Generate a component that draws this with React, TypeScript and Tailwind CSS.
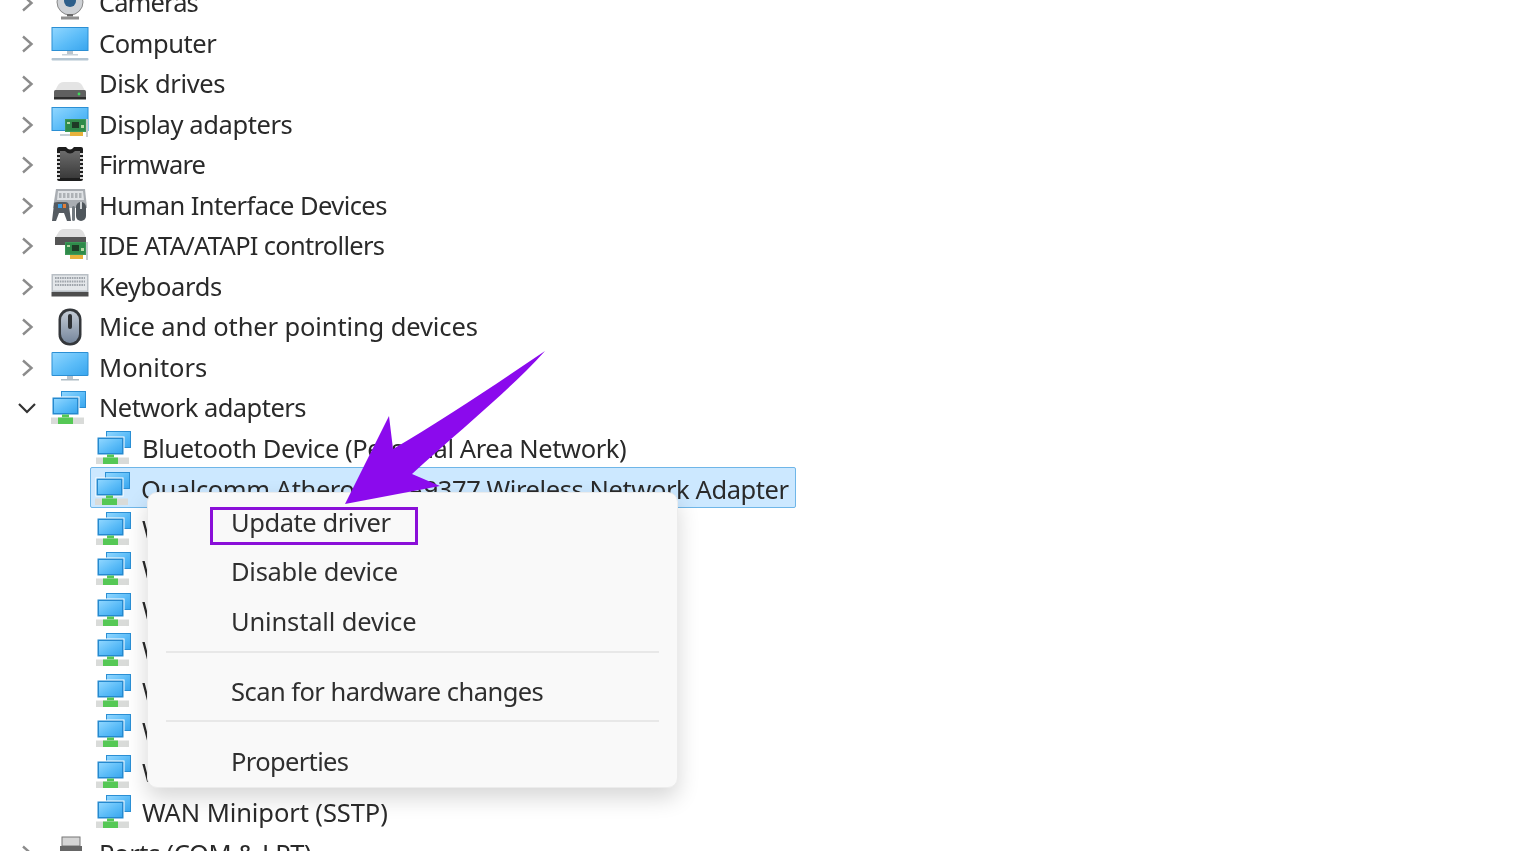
import React from "react";

const Gradients = () => (
  <svg width="0" height="0" className="absolute">
    <defs>
      <linearGradient id="scr" x1="0" y1="0" x2="1" y2="1">
        <stop offset="0" stopColor="#8fd6ff" />
        <stop offset="0.55" stopColor="#5bbcf8" />
        <stop offset="1" stopColor="#3aa6ee" />
      </linearGradient>
      <linearGradient id="chip" x1="0" y1="0" x2="0" y2="1">
        <stop offset="0" stopColor="#6b6b6b" />
        <stop offset="1" stopColor="#3a3a3a" />
      </linearGradient>
      <linearGradient id="mouse" x1="0" y1="0" x2="0" y2="1">
        <stop offset="0" stopColor="#c4ccd6" />
        <stop offset="1" stopColor="#76869c" />
      </linearGradient>
    </defs>
  </svg>
);

const Card = ({ x = 16, y = 20 }: { x?: number; y?: number }) => (
  <g transform={`translate(${x} ${y})`}>
    <rect x="0" y="0" width="21" height="13" fill="#3f9a5a" />
    <rect x="0.8" y="0.8" width="19.4" height="11" fill="#2f8a4a" />
    <rect x="7" y="3" width="7" height="6" fill="#1e3b26" />
    <rect x="2" y="3" width="3" height="2" fill="#b5d9a4" />
    <rect x="16" y="6" width="3" height="3" fill="#b5d9a4" />
    <rect x="5" y="13" width="13" height="4" fill="#e8b23c" />
    <rect x="21" y="0" width="2" height="18" fill="#c8ccd0" />
  </g>
);

const ComputerIcon = () => (
  <svg viewBox="0 0 40 36" className="w-10 h-9">
    <rect x="1.5" y="1" width="37" height="24" fill="#2b8fd4" />
    <rect x="2.5" y="2" width="35" height="22" fill="url(#scr)" />
    <rect x="17" y="25" width="6" height="3" fill="#b9c4cc" />
    <rect x="12" y="28" width="16" height="1.5" fill="#c8d2d9" />
    <rect x="1.5" y="32" width="37" height="2.5" rx="1" fill="#b4c5d2" />
  </svg>
);
const MonitorIcon = () => (
  <svg viewBox="0 0 40 36" className="w-10 h-9">
    <rect x="1.5" y="2" width="37" height="24" rx="1" fill="#2b8fd4" />
    <rect x="2.5" y="3" width="35" height="22" fill="url(#scr)" />
    <rect x="17" y="26" width="6" height="3" fill="#b9c4cc" />
    <rect x="11" y="29" width="18" height="1.5" fill="#aebbc4" />
  </svg>
);
const DiskIcon = () => (
  <svg viewBox="0 0 40 36" className="w-10 h-9">
    <path d="M7 21 Q9 16 14 16 H26 Q31 16 33 21 L35 25 H5 Z" fill="#e4e4e4" />
    <rect x="4" y="24" width="32" height="9" rx="1.5" fill="#606060" />
    <rect x="4" y="31" width="32" height="2.5" fill="#2d2d2d" />
    <circle cx="29" cy="28" r="1.4" fill="#3ddc5a" />
  </svg>
);
const DisplayIcon = () => (
  <svg viewBox="0 0 40 38" className="w-10 h-[38px]">
    <rect x="1.5" y="1" width="37" height="24" fill="#2b8fd4" />
    <rect x="2.5" y="2" width="35" height="22" fill="url(#scr)" />
    <rect x="10" y="28" width="10" height="2" fill="#c6d0d6" />
    <Card x={15} y={13} />
  </svg>
);
const FirmwareIcon = () => (
  <svg viewBox="0 0 40 38" className="w-10 h-[38px]">
    <path d="M7 3 Q7 1 9 1 H16 Q20 6 24 1 H31 Q33 1 33 3 V33 Q33 35 31 35 H9 Q7 35 7 33 Z" fill="#1d1d1d" />
    <path d="M10 5 H15 Q20 10 25 5 H30 V32 H10 Z" fill="url(#chip)" />
    {[7, 11, 15, 19, 23, 27, 31].map((y) => (
      <g key={y}>
        <rect x="7" y={y} width="3" height="2" fill="#d8d8d8" />
        <rect x="30" y={y} width="3" height="2" fill="#d8d8d8" />
      </g>
    ))}
  </svg>
);
const HidIcon = () => (
  <svg viewBox="0 0 40 36" className="w-10 h-9">
    <path d="M6 1 H35 L37 20 H3 Z" fill="#a9adb2" />
    <path d="M8 3 H33 L34 12 H7 Z" fill="#dfe2e5" />
    {[9, 13, 17, 21, 25, 29].map((x) => (
      <rect key={x} x={x} y="5" width="2.5" height="5" fill="#aeb2b6" />
    ))}
    <path d="M4 16 Q3 14 8 14 H15 Q19 14 19 18 L21 33 H17 L14 25 H9 L6 33 H2 Z" fill="#555b61" />
    <rect x="8" y="16" width="4" height="4" fill="#3a9ae0" />
    <rect x="13" y="16" width="3" height="4" fill="#e07f3a" />
    <rect x="26" y="14" width="10" height="19" rx="5" fill="#4f565c" />
    <rect x="30" y="14" width="2" height="7" fill="#cfd3d6" />
    <rect x="22" y="18" width="3" height="15" rx="1.5" fill="#71787e" />
  </svg>
);
const IdeIcon = () => (
  <svg viewBox="0 0 40 38" className="w-10 h-[38px]">
    <path d="M8 6 Q10 2 14 2 H28 Q32 2 34 6 L36 11 H5 Z" fill="#dfdfdf" />
    <rect x="5" y="10" width="31" height="8" fill="#555" />
    <Card x={15} y={15} />
  </svg>
);
const KeyboardIcon = () => (
  <svg viewBox="0 0 40 28" className="w-10 h-7">
    <rect x="1.5" y="1" width="37" height="18" fill="#b9bfc5" />
    <rect x="3" y="2.5" width="34" height="15" fill="#e4e7ea" />
    {[5, 8.5, 12].map((y) => (
      <path key={y} d={`M5 ${y} H35`} stroke="#9ea4aa" strokeWidth="2" strokeDasharray="1.6 0.8" fill="none" />
    ))}
    <rect x="1.5" y="19" width="37" height="4.5" fill="#4d4d4d" />
  </svg>
);
const MouseIcon = () => (
  <svg viewBox="0 0 40 38" className="w-10 h-[38px]">
    <rect x="8.5" y="0.5" width="23" height="37" rx="11" fill="#34373b" />
    <rect x="11" y="3" width="18" height="32" rx="9" fill="url(#mouse)" />
    <rect x="18" y="6" width="4" height="15" rx="2" fill="#2e3135" />
  </svg>
);
const CameraIcon = () => (
  <svg viewBox="0 0 40 36" className="w-10 h-9">
    <circle cx="20" cy="17" r="13" fill="#cfd2d6" stroke="#888" strokeWidth="1" />
    <circle cx="20" cy="16" r="6" fill="#2e5f8a" />
    <rect x="17" y="29" width="6" height="2.5" fill="#6a6a6a" />
    <rect x="11" y="31.5" width="18" height="3" fill="#8f8f8f" />
  </svg>
);
const NetIcon = () => (
  <svg viewBox="0 0 38 36" className="w-[38px] h-9">
    <rect x="11" y="1" width="25" height="17" fill="#2b8fd4" />
    <rect x="12" y="2" width="23" height="15" fill="url(#scr)" />
    <rect x="1.5" y="6.5" width="28" height="19" fill="#ffffff" />
    <rect x="2.5" y="7.5" width="26" height="17" fill="#2589cf" />
    <rect x="4" y="9" width="23" height="14" fill="url(#scr)" />
    <rect x="12" y="24.5" width="7" height="3" fill="#55c855" />
    <rect x="1" y="27.5" width="33" height="6.5" fill="#d9dbd9" />
    <rect x="8" y="27.5" width="15" height="6.5" fill="#55c855" />
  </svg>
);
const PortIcon = () => (
  <svg viewBox="0 0 40 36" className="w-10 h-9">
    <rect x="12" y="1" width="18" height="9" fill="#d5d5d5" stroke="#777" />
    <rect x="10" y="10" width="22" height="26" fill="#666" />
  </svg>
);

const Chevron = ({ open }: { open?: boolean }) =>
  open ? (
    <svg viewBox="0 0 20 12" className="w-5 h-3 -ml-1">
      <path d="M2 2 L10 10 L18 2" fill="none" stroke="#333" strokeWidth="2.2" />
    </svg>
  ) : (
    <svg viewBox="0 0 13 18" className="w-[13px] h-[18px]">
      <path d="M2 1.5 L10.5 9 L2 16.5" fill="none" stroke="#8c8c8c" strokeWidth="2.4" />
    </svg>
  );

const font = "font-['Noto_Sans','Open_Sans',sans-serif]";

const Top = ({ icon, label, open, t }: { icon: React.ReactNode; label: string; open?: boolean; t: string }) => (
  <div className="flex items-center h-[40.5px] pl-[21px] text-[#2a2a2a]">
    <div className="w-[29px] flex items-center pt-[2px]">
      <Chevron open={open} />
    </div>
    <div className="w-[49px] flex items-center pt-[2px]">{icon}</div>
    <span className={`text-[25.5px] whitespace-nowrap ${t}`}>{label}</span>
  </div>
);

const Child = ({ label, selected, t }: { label: string; selected?: boolean; t: string }) => (
  <div className="flex items-center h-[40.5px] pl-[90px] text-[#2a2a2a]">
    <div
      className={
        selected
          ? "flex items-center self-start h-[41px] -mt-px pt-[3px] w-[706px] pl-[2.5px] bg-[#cce8ff] border border-[#6fb6e8] rounded-[2px]"
          : "flex items-center h-full pl-[3.5px] border border-transparent"
      }
    >
      <div className="w-[47.5px] flex items-center">
        <NetIcon />
      </div>
      <span className={`text-[25.5px] whitespace-nowrap ${t}`}>{label}</span>
    </div>
  </div>
);

const MenuItem = ({ label, className }: { label: string; className: string }) => (
  <div className={`flex items-center pl-[83px] text-[25.5px] text-[#2f2f2f] ${className}`}>{label}</div>
);

export default function App() {
  return (
    <div className={`relative w-[1535px] h-[851px] overflow-hidden bg-white blur-[0.4px] ${font}`}>
      <Gradients />
      <div className="-mt-[18px]">
        <Top icon={<CameraIcon />} label="Cameras" t="tracking-[-0.9px]" />
        <Top icon={<ComputerIcon />} label="Computer" t="tracking-[-0.47px]" />
        <Top icon={<DiskIcon />} label="Disk drives" t="tracking-[-0.35px]" />
        <Top icon={<DisplayIcon />} label="Display adapters" t="tracking-[-0.41px]" />
        <Top icon={<FirmwareIcon />} label="Firmware" t="tracking-[-0.85px]" />
        <Top icon={<HidIcon />} label="Human Interface Devices" t="tracking-[-0.57px]" />
        <Top icon={<IdeIcon />} label="IDE ATA/ATAPI controllers" t="tracking-[-0.71px]" />
        <Top icon={<KeyboardIcon />} label="Keyboards" t="tracking-[-0.35px]" />
        <Top icon={<MouseIcon />} label="Mice and other pointing devices" t="tracking-[-0.12px]" />
        <Top icon={<MonitorIcon />} label="Monitors" t="tracking-[0px]" />
        <Top icon={<NetIcon />} label="Network adapters" open t="tracking-[-0.54px]" />
        <Child label="Bluetooth Device (Personal Area Network)" t="tracking-[-0.42px]" />
        <Child label="Qualcomm Atheros QCA9377 Wireless Network Adapter" selected t="tracking-[-0.41px]" />
        <Child label="WAN Miniport (IKEv2)" t="tracking-[-0.35px]" />
        <Child label="WAN Miniport (IP)" t="tracking-[-0.35px]" />
        <Child label="WAN Miniport (IPv6)" t="tracking-[-0.35px]" />
        <Child label="WAN Miniport (L2TP)" t="tracking-[-0.35px]" />
        <Child label="WAN Miniport (Network Monitor)" t="tracking-[-0.35px]" />
        <Child label="WAN Miniport (PPPOE)" t="tracking-[-0.35px]" />
        <Child label="WAN Miniport (PPTP)" t="tracking-[-0.35px]" />
        <Child label="WAN Miniport (SSTP)" t="tracking-[-0.09px]" />
        <Top icon={<PortIcon />} label="Ports (COM & LPT)" t="tracking-[-0.35px]" />
      </div>

      <div className="absolute left-[147px] top-[492px] w-[531px] h-[296px] bg-[#f9f9f9] rounded-[10px] border border-[#ececec] shadow-[0_10px_22px_rgba(0,0,0,0.16)] flex flex-col">
        <MenuItem label="Update driver" className="h-[46px] mt-[6px] -mb-[2px] tracking-[-0.43px]" />
        <MenuItem label="Disable device" className="h-[50px] mt-[3px] tracking-[-0.28px]" />
        <MenuItem label="Uninstall device" className="h-[50px] tracking-[-0.16px]" />
        <div className="h-[2px] mx-[18px] mt-[5px] bg-[#e8e8e8]" />
        <MenuItem label="Scan for hardware changes" className="h-[50px] mt-[13px] tracking-[-0.54px]" />
        <div className="h-[2px] mx-[18px] mt-[4px] bg-[#e8e8e8]" />
        <MenuItem label="Properties" className="h-[50px] mt-[14px] tracking-[-0.65px]" />
      </div>

      <div className="absolute left-[210px] top-[507px] w-[208px] h-[38px] border-[3px] border-[#8a0fd8]" />

      <svg viewBox="0 0 1535 851" className="absolute inset-0 w-[1535px] h-[851px] pointer-events-none">
        <path
          d="M545 351 C495 385 440 422 393 449 L389 416 L345 504 L440 486 L412 474 C460 430 510 390 545 351 Z"
          fill="#8b0aed"
        />
      </svg>
    </div>
  );
}
